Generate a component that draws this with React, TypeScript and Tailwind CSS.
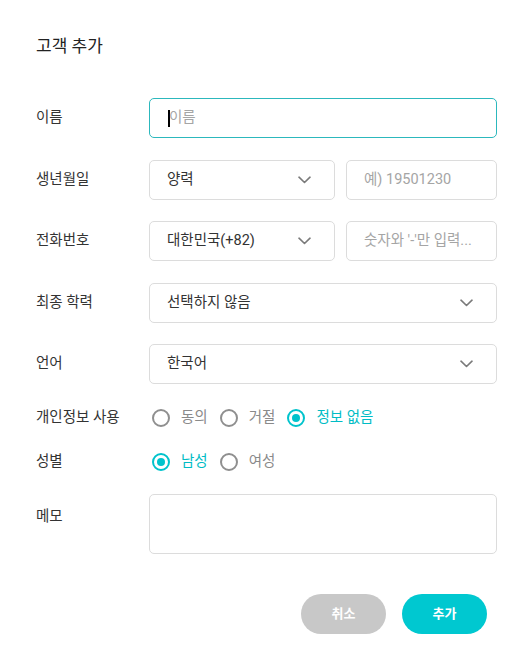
import React from 'react';

const FONT = { fontFamily: "Roboto, 'Noto Sans CJK KR', sans-serif" };

const Chevron: React.FC = () => (
    <svg width="13" height="8" viewBox="0 0 13 8" fill="none" className="shrink-0">
        <path d="M1 1.2L6.5 6.5L12 1.2" stroke="#7a7a7a" strokeWidth="1.6" strokeLinecap="round" strokeLinejoin="round" />
    </svg>
);

const Select: React.FC<{ value: string; className?: string }> = ({ value, className = '' }) => (
    <div className={`h-10 flex items-center justify-between pl-[17px] pr-[23px] border border-[#dcdcdc] rounded-[5px] bg-white ${className}`}>
        <span className="text-[14.5px] text-[#333]">{value}</span>
        <Chevron />
    </div>
);

const TextBox: React.FC<{ placeholder: string; className?: string }> = ({ placeholder, className = '' }) => (
    <div className={`h-10 flex items-center px-[17px] border border-[#dcdcdc] rounded-[5px] bg-white overflow-hidden ${className}`}>
        <span className="text-[14.5px] text-[#a5a5a5] whitespace-nowrap">{placeholder}</span>
    </div>
);

const Radio: React.FC<{ label: string; checked?: boolean }> = ({ label, checked }) => (
    <div className="flex items-center gap-[11px]">
        {checked ? (
            <span className="w-[18px] h-[18px] rounded-full border-2 border-[#00c3cc] flex items-center justify-center">
                <span className="w-[8px] h-[8px] rounded-full bg-[#00c3cc]"></span>
            </span>
        ) : (
            <span className="w-[18px] h-[18px] rounded-full border-2 border-[#8f8f8f]"></span>
        )}
        <span className={`text-[14.5px] ${checked ? 'text-[#00bcc5]' : 'text-[#8a8a8a]'}`}>{label}</span>
    </div>
);

const Row: React.FC<{ label: string; children: React.ReactNode }> = ({ label, children }) => (
    <div className="flex items-center">
        <div className="w-[113px] shrink-0 text-[14.5px] text-[#333]">{label}</div>
        <div className="flex-1 flex gap-[11px]">{children}</div>
    </div>
);

const App: React.FC = () => {
    return (
        <div className="w-[532px] h-[665px] bg-white pl-9 pr-[35px] pt-[33px]" style={FONT}>
            {/* Title */}
            <h1 className="text-[17px] text-[#222] leading-[26px]">고객 추가</h1>

            <div className="mt-[39px] flex flex-col gap-[21.5px]">
                <Row label="이름">
                    <div className="flex-1 h-10 flex items-center px-[18px] border border-[#2cb8bd] rounded-[5px]">
                        <span className="w-[2px] h-[17px] bg-black"></span>
                        <span className="text-[14.5px] text-[#a5a5a5] -ml-[1px]">이름</span>
                    </div>
                </Row>
                <Row label="생년월일">
                    <Select value="양력" className="w-[186px]" />
                    <TextBox placeholder="예) 19501230" className="flex-1" />
                </Row>
                <Row label="전화번호">
                    <Select value="대한민국(+82)" className="w-[186px]" />
                    <TextBox placeholder="숫자와 '-'만 입력..." className="flex-1" />
                </Row>
                <Row label="최종 학력">
                    <Select value="선택하지 않음" className="flex-1" />
                </Row>
                <Row label="언어">
                    <Select value="한국어" className="flex-1" />
                </Row>
            </div>

            {/* Radio groups */}
            <div className="mt-[22px] flex flex-col gap-5">
                <div className="flex items-center h-6">
                    <div className="w-[116px] shrink-0 text-[14.5px] text-[#333]">개인정보 사용</div>
                    <div className="flex items-center gap-3">
                        <Radio label="동의" />
                        <Radio label="거절" />
                        <Radio label="정보 없음" checked />
                    </div>
                </div>
                <div className="flex items-center h-6">
                    <div className="w-[116px] shrink-0 text-[14.5px] text-[#333]">성별</div>
                    <div className="flex items-center gap-3">
                        <Radio label="남성" checked />
                        <Radio label="여성" />
                    </div>
                </div>
            </div>

            {/* Memo */}
            <div className="mt-5 flex">
                <div className="w-[113px] shrink-0 pt-[12px] text-[14.5px] text-[#333]">메모</div>
                <div className="flex-1 h-[60px] border border-[#dcdcdc] rounded-[5px]"></div>
            </div>

            {/* Actions */}
            <div className="mt-[40px] flex justify-end gap-4 pr-[10px]">
                <button className="w-[85px] h-10 rounded-full bg-[#c8c8c8] text-white text-[13px] font-bold">취소</button>
                <button className="w-[85px] h-10 rounded-full bg-[#00c8d0] text-white text-[13px] font-bold">추가</button>
            </div>
        </div>
    );
};

export default App;
